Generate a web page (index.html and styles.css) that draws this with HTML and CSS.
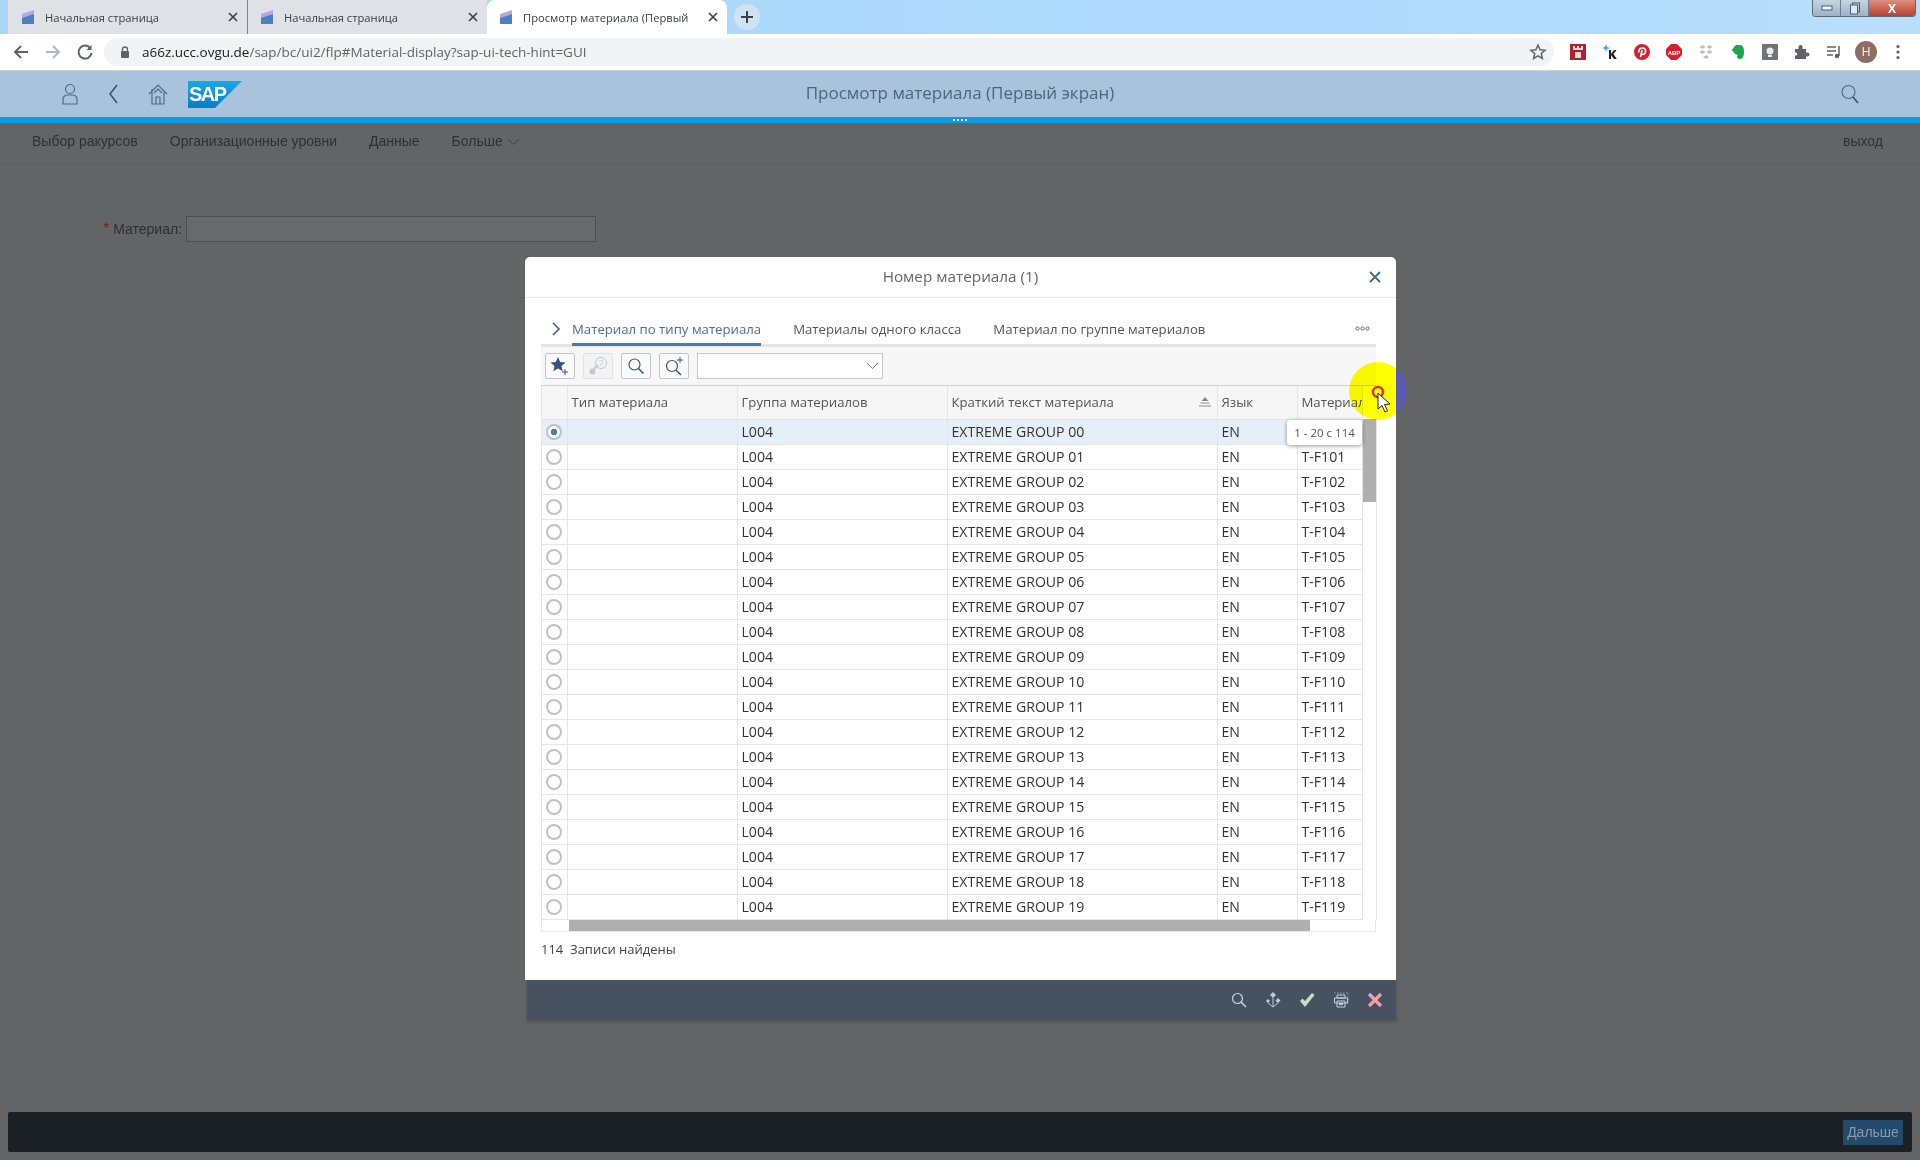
FILE: index.html
```html
<!DOCTYPE html>
<html>
<head>
    <meta charset="UTF-8">
    <title>Просмотр материала (Первый экран)</title>
    <link rel="stylesheet" href="styles.css">
</head>
<body>

<div class="tabstrip">
    <div class="tab">
        <svg class="favicon" viewBox="0 0 16 16"><path d="M2 5l12-4v14H2z" fill="#b9a6dc"/><path d="M2 9l12-4v10H2z" fill="#4d7fc4"/></svg>
        <span class="tab-title">Начальная страница</span>
        <svg class="tab-close" viewBox="0 0 10 10"><path d="M1 1l8 8M9 1L1 9" stroke="#3c4043" stroke-width="1.600"/></svg>
    </div>
    <div class="tab tab-sep">
        <svg class="favicon" viewBox="0 0 16 16"><path d="M2 5l12-4v14H2z" fill="#b9a6dc"/><path d="M2 9l12-4v10H2z" fill="#4d7fc4"/></svg>
        <span class="tab-title">Начальная страница</span>
        <svg class="tab-close" viewBox="0 0 10 10"><path d="M1 1l8 8M9 1L1 9" stroke="#3c4043" stroke-width="1.600"/></svg>
    </div>
    <div class="tab tab-active">
        <svg class="favicon" viewBox="0 0 16 16"><path d="M2 5l12-4v14H2z" fill="#b9a6dc"/><path d="M2 9l12-4v10H2z" fill="#4d7fc4"/></svg>
        <span class="tab-title">Просмотр материала (Первый</span>
        <svg class="tab-close" viewBox="0 0 10 10"><path d="M1 1l8 8M9 1L1 9" stroke="#3c4043" stroke-width="1.600"/></svg>
    </div>
    <div class="tab-new">
        <svg width="14" height="14" viewBox="0 0 14 14"><path d="M7 1v12M1 7h12" stroke="#3c4043" stroke-width="2"/></svg>
    </div>
    <div class="win-controls">
        <span class="win-btn"><svg width="12" height="8" viewBox="0 0 12 8"><rect x="1" y="2" width="10" height="4" fill="#eef4f9" stroke="#4d5e6e"/></svg></span>
        <span class="win-btn"><svg width="12" height="13" viewBox="0 0 12 13"><rect x="3.5" y="1" width="7" height="9" fill="none" stroke="#4d5e6e"/><rect x="1.5" y="3" width="7" height="9" fill="#dfe9f2" stroke="#4d5e6e"/></svg></span>
        <span class="win-btn win-close">X</span>
    </div>
</div>

<div class="browserbar">
    <svg class="nav-icon" viewBox="0 0 18 18"><path d="M16 9H3M9 3L3 9l6 6" fill="none" stroke="#5f6368" stroke-width="2"/></svg>
    <svg class="nav-icon" viewBox="0 0 18 18"><path d="M2 9h13M9 3l6 6-6 6" fill="none" stroke="#b4b7bb" stroke-width="2"/></svg>
    <svg class="nav-icon" viewBox="0 0 18 18"><path d="M14.5 5.5A6.5 6.5 0 1 0 15.500 10" fill="none" stroke="#5f6368" stroke-width="2"/><path d="M15.500 2v5h-5z" fill="#5f6368"/></svg>
    <div class="omnibox">
        <svg class="lock" viewBox="0 0 10 12"><path d="M2.500 5V3.500a2.500 2.500 0 0 1 5 0V5" fill="none" stroke="#5f6368" stroke-width="1.300"/><rect x="1" y="5" width="8" height="7" rx="1" fill="#5f6368"/></svg>
        <span class="url"><span class="url-host">a66z.ucc.ovgu.de</span>/sap/bc/ui2/flp#Material-display?sap-ui-tech-hint=GUI</span>
        <svg class="bookmark" viewBox="0 0 18 18"><path d="M9 2l2.100 4.700 5 .5-3.800 3.300 1.100 5L9 12.900l-4.400 2.600 1.100-5L1.900 7.200l5-.5z" fill="none" stroke="#5f6368" stroke-width="1.500"/></svg>
    </div>
    <div class="extensions">
        <svg class="ext" viewBox="0 0 16 16"><rect width="16" height="16" fill="#b3202c"/><path d="M3 2h2v2h2V2h2v2h2V2h2v4H3zM5 8h6v6H5z" fill="#f1d9d9"/></svg>
        <svg class="ext" viewBox="0 0 16 16"><path d="M4 0l1 3 3 1-3 1-1 3-1-3-3-1 3-1z" fill="#39a7dd"/><path d="M7 6h2v4l3-4h2.500l-3 4 3.200 5H12l-3-4v4H7z" fill="#202124"/></svg>
        <svg class="ext" viewBox="0 0 16 16"><circle cx="8" cy="8" r="8" fill="#d5202e"/><path d="M6.500 13l1.600-7M5 8.500C4 5.500 6.500 4 8.500 4s3.500 1.500 3 4-3 3.200-4 1.800" fill="none" stroke="#fff" stroke-width="1.600"/></svg>
        <svg class="ext" viewBox="0 0 16 16"><path d="M5 0h6l5 5v6l-5 5H5l-5-5V5z" fill="#d5202e"/><text x="8" y="10.500" class="ext-abp">ABP</text></svg>
        <svg class="ext" viewBox="0 0 16 16"><path d="M4.500 1l3 2-3 2-3-2zM11.500 1l3 2-3 2-3-2zM4.500 6l3 2-3 2-3-2zM11.500 6l3 2-3 2-3-2zM8 11l3 2-3 2-3-2z" fill="#bcc0c4"/></svg>
        <svg class="ext" viewBox="0 0 16 16"><path d="M4 3l2-2h4c3 0 4 3 4 7 0 5-2 7-4 7-2 0-3-1-3-2.500S8.500 11 9.500 11.500C7 11 4 10 3 7H1.500z" fill="#1fa64a"/></svg>
        <svg class="ext" viewBox="0 0 16 16"><rect width="16" height="16" rx="1" fill="#6f7478"/><circle cx="8" cy="7" r="3.500" fill="#e8eaed"/><rect x="6" y="11" width="4" height="2" fill="#e8eaed"/></svg>
        <svg class="ext" viewBox="0 0 16 16"><path d="M1 5h3.500V3a2 2 0 0 1 4 0v2H12v3.500h1.500a2 2 0 0 1 0 4H12V15H1v-3.500h1.500a2 2 0 0 0 0-3H1z" fill="#5f6368"/></svg>
        <svg class="ext" viewBox="0 0 16 16"><path d="M1 3h9M1 7h9M1 11h6" stroke="#5f6368" stroke-width="1.500"/><path d="M13 2v10" stroke="#5f6368" stroke-width="1.500"/><circle cx="11" cy="12" r="2.200" fill="#5f6368"/></svg>
        <span class="avatar">H</span>
        <svg class="ext" viewBox="0 0 16 16"><circle cx="8" cy="2.500" r="1.600" fill="#5f6368"/><circle cx="8" cy="8" r="1.600" fill="#5f6368"/><circle cx="8" cy="13.500" r="1.600" fill="#5f6368"/></svg>
    </div>
</div>

<header class="shell">
    <div class="shell-left">
        <svg class="shell-icon" viewBox="0 0 20 22"><circle cx="10" cy="6" r="4.500" fill="none" stroke="#4f6b88" stroke-width="1.200"/><path d="M3 21v-5c0-2 2-4 4-4h6c2 0 4 2 4 4v5z" fill="none" stroke="#4f6b88" stroke-width="1.200"/></svg>
        <svg class="shell-icon" viewBox="0 0 20 22"><path d="M13 2l-7 9 7 9" fill="none" stroke="#34506d" stroke-width="1.500"/></svg>
        <svg class="shell-icon" viewBox="0 0 20 22"><path d="M1 11l9-9 9 9M4 6v15h12V9M8 21v-7h4v7M6 10l4-4 4 4" fill="none" stroke="#4f6b88" stroke-width="1.200"/></svg>
        <svg class="sap-logo" viewBox="0 0 54 27"><defs><linearGradient id="sapfill" x1="0" y1="0" x2="0" y2="1"><stop offset="0" stop-color="#16a9e6"/><stop offset="1" stop-color="#0a7ec2"/></linearGradient></defs><path d="M0 0h54L27 27H0z" fill="url(#sapfill)"/><text x="1" y="20" class="sap-text">SAP</text></svg>
    </div>
    <div class="shell-title">Просмотр материала (Первый экран)</div>
    <div class="shell-right">
        <svg class="shell-icon" viewBox="0 0 20 22"><circle cx="8.500" cy="9" r="6.500" fill="none" stroke="#4f6b88" stroke-width="1.200"/><path d="M13 14l5 6" stroke="#34506d" stroke-width="1.500"/></svg>
    </div>
</header>
<div class="shell-band"><span class="grip"></span></div>

<nav class="menubar">
    <span>Выбор ракурсов</span>
    <span>Организационные уровни</span>
    <span>Данные</span>
    <span class="menu-more">Больше
        <svg width="11" height="7" viewBox="0 0 11 7"><path d="M.5.500l5 5 5-5" fill="none" stroke="#3a3c3e"/></svg>
    </span>
    <span class="menu-exit">выход</span>
</nav>

<div class="form-row">
    <span class="req">*</span>
    <label class="form-label">Материал:</label>
    <div class="form-input"></div>
</div>

<footer class="statusbar">
    <span class="next-btn">Дальше</span>
</footer>

<div class="dialog">
    <div class="dialog-title">
        <span>Номер материала (1)</span>
        <svg class="dialog-close" viewBox="0 0 12 12"><path d="M1 1l10 10M11 1L1 11" stroke="#3f6a92" stroke-width="1.800"/></svg>
    </div>
    <div class="dialog-body">
        <div class="tabs">
            <svg class="tabs-arrow" viewBox="0 0 10 14"><path d="M2 1l6 6-6 6" fill="none" stroke="#3f5f80" stroke-width="1.600"/></svg>
            <span class="dtab dtab-on">Материал по типу материала</span>
            <span class="dtab">Материалы одного класса</span>
            <span class="dtab">Материал по группе материалов</span>
            <svg class="tabs-more" viewBox="0 0 15 5"><circle cx="2.500" cy="2.500" r="1.600" fill="none" stroke="#666"/><circle cx="7.500" cy="2.500" r="1.600" fill="none" stroke="#666"/><circle cx="12.500" cy="2.500" r="1.600" fill="none" stroke="#666"/></svg>
        </div>
        <div class="toolbar">
            <span class="tool">
                <svg width="20" height="20" viewBox="0 0 20 20"><path d="M8 1l2.200 5 5.300.5-4 3.500 1.200 5.200L8 12.500 3.300 15.200 4.500 10l-4-3.500L5.800 6z" fill="#33567a"/><path d="M15 13v6M12 16h6" stroke="#33567a"/></svg>
            </span>
            <span class="tool tool-off">
                <svg width="20" height="20" viewBox="0 0 20 20"><circle cx="4.500" cy="15.500" r="3" fill="#c4c8cc"/><path d="M6 13l4-4" stroke="#c4c8cc" stroke-width="2"/><circle cx="13" cy="7" r="5.500" fill="none" stroke="#c4c8cc"/><text x="13" y="10" class="tool-q">?</text></svg>
            </span>
            <span class="tool">
                <svg width="18" height="18" viewBox="0 0 18 18"><circle cx="7.500" cy="7.500" r="5.500" fill="none" stroke="#33567a" stroke-width="1.200"/><path d="M11.500 11.500l5 5" stroke="#33567a" stroke-width="1.500"/></svg>
            </span>
            <span class="tool">
                <svg width="20" height="20" viewBox="0 0 20 20"><circle cx="8" cy="10" r="5.500" fill="none" stroke="#33567a" stroke-width="1.200"/><path d="M12 14l5 5" stroke="#33567a" stroke-width="1.500"/><path d="M16 1v6M13 4h6" stroke="#33567a"/></svg>
            </span>
            <div class="tool-select">
                <svg width="13" height="8" viewBox="0 0 13 8"><path d="M1 1l5.500 5.500L12 1" fill="none" stroke="#777"/></svg>
            </div>
        </div>

        <div class="grid-wrap">
            <div class="grid-main">
                <table class="grid">
                    <colgroup>
                        <col class="c-radio"><col class="c-type"><col class="c-group"><col class="c-text"><col class="c-lang"><col class="c-mat">
                    </colgroup>
                    <thead>
                        <tr>
                            <th></th>
                            <th>Тип материала</th>
                            <th>Группа материалов</th>
                            <th class="th-sort">Краткий текст материала
                                <svg class="sort-icon" viewBox="0 0 12 10"><path d="M6 0L9.500 4h-7z" fill="#8a8a8a"/><path d="M1.500 6h9M0 9h12" stroke="#8a8a8a"/></svg>
                            </th>
                            <th>Язык</th>
                            <th>Материал</th>
                        </tr>
                    </thead>
                    <tbody>
                        <tr class="row-on"><td><span class="radio radio-on"></span></td><td></td><td>L004</td><td>EXTREME GROUP 00</td><td>EN</td><td></td></tr>
                        <tr><td><span class="radio"></span></td><td></td><td>L004</td><td>EXTREME GROUP 01</td><td>EN</td><td>T-F101</td></tr>
                        <tr><td><span class="radio"></span></td><td></td><td>L004</td><td>EXTREME GROUP 02</td><td>EN</td><td>T-F102</td></tr>
                        <tr><td><span class="radio"></span></td><td></td><td>L004</td><td>EXTREME GROUP 03</td><td>EN</td><td>T-F103</td></tr>
                        <tr><td><span class="radio"></span></td><td></td><td>L004</td><td>EXTREME GROUP 04</td><td>EN</td><td>T-F104</td></tr>
                        <tr><td><span class="radio"></span></td><td></td><td>L004</td><td>EXTREME GROUP 05</td><td>EN</td><td>T-F105</td></tr>
                        <tr><td><span class="radio"></span></td><td></td><td>L004</td><td>EXTREME GROUP 06</td><td>EN</td><td>T-F106</td></tr>
                        <tr><td><span class="radio"></span></td><td></td><td>L004</td><td>EXTREME GROUP 07</td><td>EN</td><td>T-F107</td></tr>
                        <tr><td><span class="radio"></span></td><td></td><td>L004</td><td>EXTREME GROUP 08</td><td>EN</td><td>T-F108</td></tr>
                        <tr><td><span class="radio"></span></td><td></td><td>L004</td><td>EXTREME GROUP 09</td><td>EN</td><td>T-F109</td></tr>
                        <tr><td><span class="radio"></span></td><td></td><td>L004</td><td>EXTREME GROUP 10</td><td>EN</td><td>T-F110</td></tr>
                        <tr><td><span class="radio"></span></td><td></td><td>L004</td><td>EXTREME GROUP 11</td><td>EN</td><td>T-F111</td></tr>
                        <tr><td><span class="radio"></span></td><td></td><td>L004</td><td>EXTREME GROUP 12</td><td>EN</td><td>T-F112</td></tr>
                        <tr><td><span class="radio"></span></td><td></td><td>L004</td><td>EXTREME GROUP 13</td><td>EN</td><td>T-F113</td></tr>
                        <tr><td><span class="radio"></span></td><td></td><td>L004</td><td>EXTREME GROUP 14</td><td>EN</td><td>T-F114</td></tr>
                        <tr><td><span class="radio"></span></td><td></td><td>L004</td><td>EXTREME GROUP 15</td><td>EN</td><td>T-F115</td></tr>
                        <tr><td><span class="radio"></span></td><td></td><td>L004</td><td>EXTREME GROUP 16</td><td>EN</td><td>T-F116</td></tr>
                        <tr><td><span class="radio"></span></td><td></td><td>L004</td><td>EXTREME GROUP 17</td><td>EN</td><td>T-F117</td></tr>
                        <tr><td><span class="radio"></span></td><td></td><td>L004</td><td>EXTREME GROUP 18</td><td>EN</td><td>T-F118</td></tr>
                        <tr><td><span class="radio"></span></td><td></td><td>L004</td><td>EXTREME GROUP 19</td><td>EN</td><td>T-F119</td></tr>
                    </tbody>
                </table>
                <div class="vscroll"><div class="vthumb"></div></div>
            </div>
            <div class="hscroll"><div class="hthumb"></div></div>
            <div class="tip">1 - 20 с 114</div>
        </div>

        <div class="found">114&nbsp; Записи найдены</div>
    </div>
    <div class="dialog-foot">
        <svg class="foot-icon" viewBox="0 0 16 16"><circle cx="6.500" cy="6.500" r="5" fill="none" stroke="#c6d3df" stroke-width="1.200"/><path d="M10 10l5 5" stroke="#c6d3df" stroke-width="1.600"/></svg>
        <svg class="foot-icon" viewBox="0 0 16 16"><path d="M8 0l3 3-3 3-3-3zM3 7l2 2-2 2-2-2zM13 6l2.500 2.500L13 11l-2.500-2.500z" fill="#b9cde0"/><path d="M8 6v9M3 11l5 4 5-4" fill="none" stroke="#b9cde0"/></svg>
        <svg class="foot-icon" viewBox="0 0 16 16"><path d="M1 9l2.500-2.500L6 9l7-8 2.500 2L6 15z" fill="#c6e0c4"/></svg>
        <svg class="foot-icon" viewBox="0 0 16 16"><path d="M1 1h14M15 1v11" fill="none" stroke="#8fa0b0" stroke-dasharray="1.500 1.500"/><path d="M4 3h8v3H4zM1.500 6h13v5h-13zM4 9h8v6H4z" fill="#465260" stroke="#c6d3df"/><rect x="6" y="11" width="4" height="2" fill="#c6d3df"/></svg>
        <svg class="foot-icon" viewBox="0 0 16 16"><path d="M2 2l12 12M14 2L2 14" stroke="#f0a0aa" stroke-width="3.200"/></svg>
    </div>
</div>

<div class="spot-glow"></div>
<div class="spot-edge"></div>
<svg class="spot-cursor" viewBox="0 0 60 60">
    <circle cx="30" cy="31" r="5" fill="none" stroke="#e0300c" stroke-width="2.500"/>
    <path d="M30 32v16l4-3.500 3 6.500 2.500-1.200-3-6.300 5.500-.5z" fill="#fff" stroke="#222" stroke-width="1"/>
</svg>

</body>
</html>
```

FILE: styles.css
```css
* {
    box-sizing: border-box;
}

html, body {
    margin: 0;
    padding: 0;
    width: 100%;
    height: 100%;
    overflow: hidden;
}

body {
    display: flex;
    flex-direction: column;
    position: relative;
    background: #636466;
    font-family: "Liberation Sans", Arial, sans-serif;
    font-size: 14px;
}

/* browser tabs */
.tabstrip {
    display: flex;
    height: 34px;
    padding-left: 8px;
    background: linear-gradient(90deg, #a9d6f8, #afdafd 70%, #b9dffb);
    font-family: "Open Sans", sans-serif;
    font-size: 11.200px;
    color: #3c4043;
}

.tab {
    display: flex;
    align-items: center;
    width: 239px;
    height: 34px;
    padding: 0 9px 0 12px;
    background: #dee1e6;
}

.tab-sep {
    width: 240px;
    padding-left: 11px;
    border-left: 1px solid #808589;
    background: #dee1e6;
}

.tab-active {
    width: 240px;
    padding-left: 11px;
    border-radius: 8px 8px 0 0;
    background: #fff;
}

.favicon {
    flex: none;
    width: 16px;
    height: 16px;
    margin-right: 9px;
}

.tab-title {
    flex: 1;
    overflow: hidden;
    white-space: nowrap;
}

.tab-close {
    flex: none;
    width: 10px;
    height: 10px;
    margin-left: 6px;
}

.tab-new {
    display: flex;
    align-items: center;
    justify-content: center;
    width: 26px;
    height: 26px;
    margin: 4px 0 0 7px;
    border-radius: 50%;
    background: #cfe3f3;
}

.win-controls {
    display: flex;
    height: 17px;
    margin-left: auto;
    margin-right: 4px;
    border: 1px solid #59697a;
    border-top: 0;
    border-radius: 0 0 4px 4px;
    overflow: hidden;
}

.win-btn {
    display: flex;
    align-items: center;
    justify-content: center;
    width: 28px;
    background: linear-gradient(#c5d5e3, #9cb2c6);
    border-right: 1px solid #6d7e8e;
}

.win-close {
    width: 46px;
    border-right: 0;
    background: linear-gradient(#dc8f80, #b8402e);
    color: #fff;
    font-weight: bold;
    font-size: 12px;
}

/* address bar */
.browserbar {
    display: flex;
    align-items: center;
    height: 37px;
    padding-left: 12px;
    background: #fff;
    border-bottom: 1px solid #d0d3d6;
}

.nav-icon {
    flex: none;
    width: 18px;
    height: 18px;
    margin-right: 14px;
}

.omnibox {
    display: flex;
    align-items: center;
    width: 1450px;
    height: 28px;
    margin-left: -4px;
    padding: 0 7px 0 16px;
    border-radius: 14px;
    background: #f1f3f4;
}

.lock {
    width: 10px;
    height: 12px;
    margin-right: 12px;
}

.url {
    flex: 1;
    font-family: "Open Sans", sans-serif;
    font-size: 13.500px;
    color: #5f6368;
}

.url-host {
    color: #202124;
}

.bookmark {
    width: 18px;
    height: 18px;
}

.extensions {
    display: flex;
    align-items: center;
    gap: 16px;
    margin-left: 16px;
}

.ext {
    flex: none;
    width: 16px;
    height: 16px;
}

.ext-abp {
    font-family: "Liberation Sans", sans-serif;
    font-size: 6px;
    font-weight: bold;
    fill: #fff;
    text-anchor: middle;
}

.avatar {
    flex: none;
    width: 22px;
    height: 22px;
    margin: 0 -3px;
    border-radius: 50%;
    background: #8d6e63;
    color: #eee;
    font-size: 12px;
    line-height: 22px;
    text-align: center;
}

/* sap shell */
.shell {
    display: grid;
    grid-template-columns: 1fr auto 1fr;
    align-items: center;
    height: 46px;
    background: #a9c3dc;
}

.shell-left {
    display: flex;
    align-items: center;
    padding-left: 60px;
}

.shell-icon {
    flex: none;
    width: 20px;
    height: 22px;
    margin-right: 24px;
}

.sap-logo {
    width: 54px;
    height: 27px;
    margin-left: -4px;
}

.sap-text {
    font-family: "Liberation Sans", sans-serif;
    font-size: 20px;
    font-weight: bold;
    fill: #fff;
    letter-spacing: -1.500px;
}

.shell-title {
    padding-bottom: 4px;
    font-family: "Open Sans", sans-serif;
    font-size: 17px;
    color: #4f6479;
}

.shell-right {
    display: flex;
    justify-content: flex-end;
    padding-right: 60px;
}

.shell-right .shell-icon {
    margin-right: 0;
}

.shell-band {
    display: flex;
    justify-content: center;
    align-items: center;
    height: 6px;
    background: #0f9be0;
}

.grip {
    width: 14px;
    border-top: 2px dotted #cfe6f5;
}

.menubar {
    display: flex;
    align-items: center;
    gap: 32px;
    height: 41px;
    padding: 0 37px 4px 32px;
    border-bottom: 1px solid #5c5d5f;
    color: #2e3032;
}

.menu-more svg {
    margin-left: 1px;
}

.menu-exit {
    margin-left: auto;
}

.form-row {
    display: flex;
    align-items: center;
    height: 26px;
    margin-top: 52px;
    padding-left: 103px;
    color: #2e3032;
}

.req {
    margin-right: 4px;
    font-size: 16px;
    color: #6d2730;
}

.form-label {
    width: 73px;
}

.form-input {
    width: 410px;
    height: 26px;
    border: 1px solid #4c4e50;
    background: #68696b;
}

.statusbar {
    display: flex;
    justify-content: flex-end;
    align-items: center;
    height: 40px;
    margin: auto 8px 8px;
    padding-right: 9px;
    border-radius: 2px;
    background: #1b2025;
}

.next-btn {
    display: block;
    width: 60px;
    height: 25px;
    background: #234a6b;
    color: #8b9aa8;
    font-size: 14px;
    line-height: 25px;
    text-align: center;
}

/* dialog */
.dialog {
    position: absolute;
    left: 525px;
    top: 257px;
    width: 871px;
    height: 763px;
    display: flex;
    flex-direction: column;
    font-family: "Open Sans", sans-serif;
    font-size: 13.200px;
    color: #333;
}

.dialog-title {
    display: flex;
    justify-content: center;
    align-items: center;
    position: relative;
    flex: none;
    height: 41px;
    padding-bottom: 2px;
    border-radius: 5px 5px 0 0;
    border-bottom: 1px solid #e8e8e8;
    background: #fff;
    font-size: 15.300px;
    color: #666;
}

.dialog-close {
    position: absolute;
    right: 15px;
    top: 14px;
    width: 12px;
    height: 12px;
}

.dialog-body {
    flex: none;
    height: 682px;
    padding: 0 20px 0 16px;
    background: #fff;
}

.tabs {
    display: flex;
    align-items: center;
    height: 49px;
    padding-top: 15px;
    border-bottom: 3px solid #e4e4e4;
}

.tabs-arrow {
    flex: none;
    width: 10px;
    height: 14px;
    margin: 0 11px 0 10px;
}

.dtab {
    display: flex;
    align-items: center;
    height: 31px;
    margin-right: 32px;
    margin-bottom: -3px;
    border-bottom: 3px solid transparent;
    color: #555;
}

.dtab-on {
    border-bottom-color: #4a7bab;
    color: #4a6f94;
}

.tabs-more {
    width: 15px;
    height: 5px;
    margin-left: auto;
    margin-right: 6px;
}

.toolbar {
    display: flex;
    align-items: center;
    gap: 8px;
    height: 39px;
    padding-left: 4px;
    border-bottom: 1px solid #cfcfcf;
    background: #f7f7f7;
}

.tool {
    display: flex;
    align-items: center;
    justify-content: center;
    width: 30px;
    height: 26px;
    border: 1px solid #c2c6ca;
    border-radius: 2px;
    background: #fafafa;
}

.tool-off {
    border-color: #e2e2e2;
    background: #f3f3f3;
}

.tool-q {
    font-family: "Liberation Sans", sans-serif;
    font-size: 9px;
    fill: #c4c8cc;
    text-anchor: middle;
}

.tool-select {
    display: flex;
    align-items: center;
    justify-content: flex-end;
    width: 186px;
    height: 26px;
    padding-right: 3px;
    border: 1px solid #c8c8c8;
    background: #fff;
}

.grid-wrap {
    position: relative;
}

.grid-main {
    display: flex;
    border-left: 1px solid #e5e5e5;
}

.grid {
    width: 820px;
    table-layout: fixed;
    border-collapse: collapse;
}

.c-radio { width: 25px; }
.c-type { width: 170px; }
.c-group { width: 210px; }
.c-text { width: 270px; }
.c-lang { width: 80px; }
.c-mat { width: 65px; }

.grid th {
    position: relative;
    height: 33px;
    padding: 0 4px;
    border-right: 1px solid #e5e5e5;
    border-bottom: 1px solid #e5e5e5;
    background: #f6f6f6;
    font-weight: normal;
    text-align: left;
    color: #555;
    white-space: nowrap;
    overflow: hidden;
}

.grid td {
    height: 25px;
    padding: 0 4px;
    border-right: 1px solid #e5e5e5;
    border-bottom: 1px solid #e5e5e5;
    font-size: 14.100px;
    white-space: nowrap;
    overflow: hidden;
}

.sort-icon {
    position: absolute;
    right: 6px;
    top: 11px;
    width: 12px;
    height: 10px;
}

.row-on td {
    background: #e5eff7;
}

.radio {
    display: block;
    width: 16px;
    height: 16px;
    margin-left: 0;
    border: 2px solid #c2c2c2;
    border-radius: 50%;
    background: #fff;
}

.radio-on {
    border-color: #b9c3cb;
    background: radial-gradient(circle, #4f7ea3 3px, #fff 3.500px);
}

.vscroll {
    width: 14px;
    flex: none;
    margin-top: 33px;
    border-right: 1px solid #e5e5e5;
}

.vthumb {
    height: 83px;
    background: #afafaf;
}

.hscroll {
    height: 12px;
    padding-left: 27px;
    border: 1px solid #e8e8e8;
    border-top: 0;
}

.hthumb {
    width: 741px;
    height: 11px;
    background: #afafaf;
}

.tip {
    position: absolute;
    left: 746px;
    top: 34px;
    width: 75px;
    height: 25px;
    border-radius: 3px;
    background: #fff;
    box-shadow: 0 1px 4px rgba(0, 0, 0, .4);
    font-size: 11.500px;
    line-height: 25px;
    text-align: center;
    color: #555;
}

.found {
    margin-top: 8px;
    line-height: 18px;
    font-size: 13px;
    color: #444;
}

.dialog-foot {
    display: flex;
    justify-content: flex-end;
    align-items: center;
    gap: 18px;
    flex: none;
    height: 40px;
    margin-left: 2px;
    padding-right: 13px;
    background: #465260;
    box-shadow: 0 2px 4px rgba(0, 0, 0, .2);
}

.foot-icon {
    flex: none;
    width: 16px;
    height: 16px;
}

/* recording highlight over the cursor */
.spot-glow,
.spot-edge {
    position: absolute;
    left: 1349px;
    top: 362px;
    width: 58px;
    height: 58px;
    border-radius: 50%;
}

.spot-glow {
    background: #ffff00;
    mix-blend-mode: multiply;
}

.spot-edge {
    background: #5a5ab4;
    clip-path: inset(0 0 0 47px);
}

.spot-cursor {
    position: absolute;
    left: 1348px;
    top: 361px;
    width: 60px;
    height: 60px;
}
```
